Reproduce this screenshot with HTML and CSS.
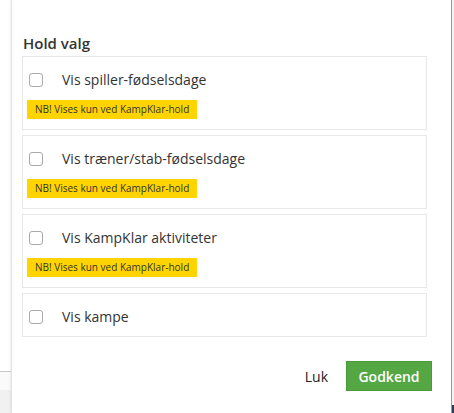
FILE: index.html
```html
<!DOCTYPE html>
<html>
<head>
<meta charset="utf-8">
<link rel="stylesheet" href="styles.css">
</head>
<body>
<div class="page">
  <div class="side-left">
    <div class="side-top"></div>
    <div class="side-mid"></div>
    <div class="side-bottom"></div>
  </div>
  <div class="modal">
    <h4 class="title">Hold valg</h4>
    <div class="card">
      <label class="row"><span class="box"></span><span class="label">Vis spiller-fødselsdage</span></label>
      <div class="badge">NB! Vises kun ved KampKlar-hold</div>
    </div>
    <div class="card">
      <label class="row"><span class="box"></span><span class="label">Vis træner/stab-fødselsdage</span></label>
      <div class="badge">NB! Vises kun ved KampKlar-hold</div>
    </div>
    <div class="card">
      <label class="row"><span class="box"></span><span class="label">Vis KampKlar aktiviteter</span></label>
      <div class="badge">NB! Vises kun ved KampKlar-hold</div>
    </div>
    <div class="card">
      <label class="row"><span class="box"></span><span class="label">Vis kampe</span></label>
    </div>
    <div class="footer">
      <button class="btn-link">Luk</button>
      <button class="btn-ok">Godkend</button>
    </div>
  </div>
  <div class="side-right"><div class="sr-top"></div><div class="sr-bottom"></div></div>
</div>
</body>
</html>
```
FILE: styles.css
```css
* { box-sizing: border-box; }
html, body { margin: 0; padding: 0; }
body {
  width: 454px;
  height: 413px;
  overflow: hidden;
  background: #fff;
  font-family: "Open Sans", "Liberation Sans", sans-serif;
  color: #333;
}
.page { display: flex; height: 413px; }
.side-left {
  width: 11px;
  display: flex;
  flex-direction: column;
  background: #fff;
}
.side-top { height: 371px; background: #fff; }
.side-mid { height: 19px; background: #fafafa; border-top: 1px solid #c8c8c8; }
.side-bottom { flex: 1; background: #f1f1f1; }
.modal {
  width: 441px;
  background: #fff;
  border-left: 1px solid #e2e2e2;
  border-right: 1px solid #9b9b9b;
  box-shadow: -1px 0 2px rgba(0,0,0,0.06);
  padding: 0 24px 0 10px;
}
.side-right { width: 2px; display: flex; flex-direction: column; }
.sr-top { height: 405px; background: #f4f4f4; }
.sr-bottom { flex: 1; background: #2c3e5a; }
.title {
  margin: 33px 0 3px 1px;
  font-size: 15px;
  font-weight: 600;
  line-height: 20px;
  color: #333;
}
.card {
  border: 1px solid #e8e8e8;
  padding: 8px 4px 4px;
  margin-bottom: 5px;
}
.row {
  display: flex;
  align-items: center;
  height: 30px;
  padding-left: 2px;
}
.box {
  width: 14px;
  height: 14px;
  border: 1px solid #a9a9a9;
  border-radius: 3px;
  background: #fff;
  flex: none;
}
.label {
  margin-left: 19px;
  font-size: 14px;
  line-height: 20px;
  color: #333;
}
.badge {
  display: inline-block;
  margin: 5px 0 6px;
  height: 19px;
  line-height: 19px;
  padding: 0 8px;
  background: #ffd400;
  font-size: 10px;
  color: #333;
}
.footer {
  display: flex;
  justify-content: flex-end;
  align-items: center;
  gap: 18px;
  margin-top: 24px;
  margin-right: -5px;
}
.btn-link {
  border: 0;
  background: none;
  padding: 0;
  font-family: inherit;
  font-size: 14px;
  color: #222;
}
.btn-ok {
  height: 30px;
  width: 86px;
  border: 1px solid #4a9a3a;
  background: #55a744;
  color: #fff;
  font-family: inherit;
  font-size: 14px;
  font-weight: 600;
  padding: 0;
}
```
